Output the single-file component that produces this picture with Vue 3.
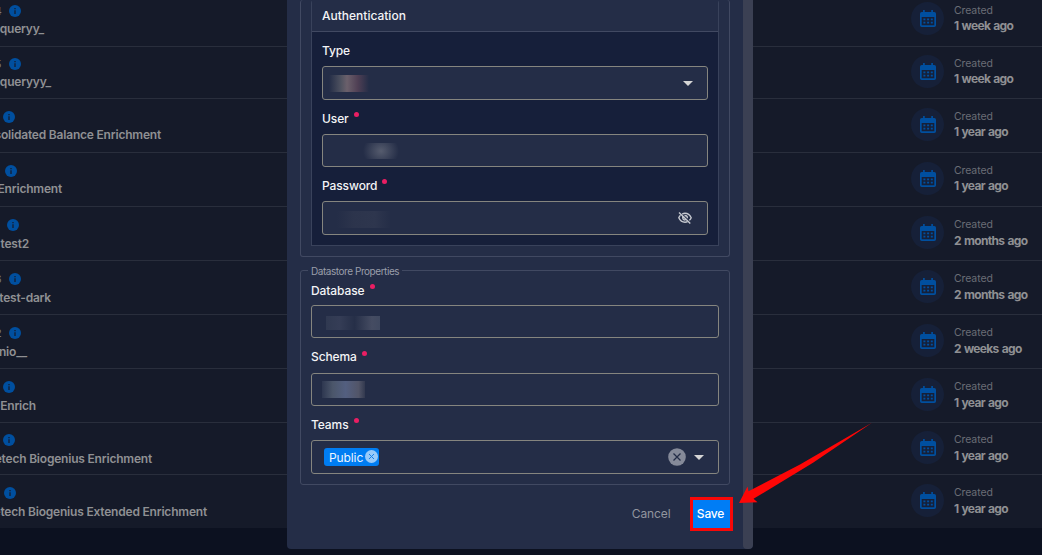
<script setup>
const rows = [
  { h: 47, pad: 2, id: '4', ix: 21.3, name: 'queryy_', nx: 44, ago: '1 week ago' },
  { h: 52, pad: 8, id: '5', ix: 21, name: 'queryyy_', nx: 51, ago: '1 week ago' },
  { h: 54, pad: 9, id: '', ix: 15.3, name: 'solidated Balance Enrichment', nx: 161, ago: '1 year ago' },
  { h: 54, pad: 9, id: '', ix: 17.3, name: 'Enrichment', nx: 62, ago: '1 year ago' },
  { h: 54, pad: 9, id: '', ix: 19.3, name: 'test2', nx: 29, down: 1, ago: '2 months ago' },
  { h: 54, pad: 9, id: '6', ix: 21, name: 'test-dark', nx: 51, down: 1, ago: '2 months ago' },
  { h: 54, pad: 9, id: '2', ix: 21.3, name: 'nio__', nx: 27, down: 1, ago: '2 weeks ago' },
  { h: 54, pad: 9, id: '', ix: 14.5, name: 'Enrich', nx: 36, down: 1, ago: '1 year ago' },
  { h: 52, pad: 8, id: '', ix: 15, name: 'etech Biogenius Enrichment', nx: 152, down: 1, ago: '1 year ago' },
  { h: 53, pad: 9, id: '', ix: 16, name: 'etech Biogenius Extended Enrichment', nx: 207, down: 1, ago: '1 year ago' },
]
</script>

<template>
  <div class="page">
    <div class="list">
      <div v-for="(r, i) in rows" :key="i" class="row" :style="{ height: r.h + 'px', paddingTop: r.pad + 'px' }">
        <div class="source">
          <div class="ident" :style="{ width: r.ix + 'px' }">
            <span>{{ r.id }}</span>
            <svg class="info" viewBox="0 0 12 12">
              <circle cx="6" cy="6" r="6" fill="#004f9f" />
              <path d="M6 2.9v1.3M6 5.2v3.7" stroke="#151a29" stroke-width="1.2" />
            </svg>
          </div>
          <div class="name" :class="{ down: r.down }" :style="{ width: r.nx + 'px' }"><span>{{ r.name }}</span></div>
        </div>
        <div class="created">
          <div class="round">
            <svg width="16" height="18" viewBox="0 0 16 18">
              <path d="M3.9 0v3M12.1 0v3" stroke="#004f9f" stroke-width="1.7" />
              <path fill-rule="evenodd" fill="#004f9f" d="M1.8 2h12.4Q16 2 16 3.8v11.4q0 1.8-1.8 1.8H1.8Q0 17 0 15.2V3.8Q0 2 1.8 2zM1.7 7v8.3h12.6V7z" />
              <path d="M3.4 9.3h9.4M3.4 12.7h9.4" stroke="#004f9f" stroke-width="1.8" stroke-dasharray="2 1.7" />
            </svg>
          </div>
          <div class="when" :class="{ down: r.down }"><span>Created</span><b>{{ r.ago }}</b></div>
        </div>
      </div>
    </div>

    <div class="modal">
      <div class="body">
        <section class="group first">
          <div class="panel">
            <header>Authentication</header>
            <div class="fields">
              <label>Type</label>
              <div class="input h34"><i class="mask m1"></i><i class="caret"></i></div>
              <label>User<em></em></label>
              <div class="input h33"><i class="mask m2"></i></div>
              <label>Password<em></em></label>
              <div class="input h34">
                <i class="mask m3"></i>
                <svg class="eye" width="14" height="12" viewBox="0 0 14 12" fill="none" stroke="#c5c8cf" stroke-width="1.4">
                  <path d="M4.2 2.1Q5.5 1.3 7 1.3c2.8 0 5 1.8 6.2 4.4-.5 1.1-1.1 2-1.9 2.6M9.6 9.7q-1.2.5-2.6.5C4.2 10.2 2 8.4.8 5.7 1.2 4.7 1.8 3.9 2.5 3.3" />
                  <path d="M6.5 3.500Q9.400 3.400 9.400 6.200M4.700 4.900Q4.400 7.900 7.500 8.100M1 .6l11.300 10.800" />
                </svg>
              </div>
            </div>
          </div>
        </section>

        <section class="group second">
          <span class="legend">Datastore Properties</span>
          <label>Database<em></em></label>
          <div class="input h33"><i class="mask m4"></i></div>
          <label>Schema<em></em></label>
          <div class="input h33"><i class="mask m5"></i></div>
          <label>Teams<em></em></label>
          <div class="input h34">
            <span class="chip">Public
              <svg width="13" height="13" viewBox="0 0 13 13">
                <circle cx="6.5" cy="6.5" r="6.5" fill="#99caf9" />
                <path d="M4 4l5 5M9 4l-5 5" stroke="#1680e8" />
              </svg>
            </span>
            <svg class="clear" width="18" height="18" viewBox="0 0 18 18">
              <circle cx="9" cy="9" r="8.8" fill="#858a99" />
              <path d="M5.5 5.5l7 7M12.500 5.500l-7 7" stroke="#242d47" stroke-width="1.3" />
            </svg>
            <i class="caret"></i>
          </div>
        </section>

        <footer><span class="cancel">Cancel</span><button class="save">Save</button></footer>
      </div>
      <div class="scroll"></div>
    </div>

    <svg class="arrow" width="1042" height="555" viewBox="0 0 1042 555">
      <path fill="#fe0606" d="M739 503L747.5 486.5L748.5 491.2L800 464.5L872 422.7L813 462.8L753.5 498.8L757.5 502.3Z" />
    </svg>
  </div>
</template>

<style>
body { margin: 0; background: #0c1120; }
</style>

<style scoped>
* { box-sizing: border-box; }
.page { position: relative; width: 1042px; height: 555px; overflow: hidden; background: #0c1120; font-family: Inter, sans-serif; font-size: 12px; }
.row { display: flex; justify-content: space-between; background: #151a29; border-bottom: 1px solid #292e3c; }
.row:last-child { border-bottom: 0; }
.source { display: flex; flex-direction: column; }
.ident { display: flex; align-items: center; justify-content: flex-end; gap: 7.5px; height: 18px; white-space: nowrap; font-size: 11px; color: #777a82; }
.info { width: 12px; height: 12px; flex: none; }
.name { display: flex; justify-content: flex-end; height: 18px; line-height: 18px; white-space: nowrap; font-weight: 600; color: #8f9093; letter-spacing: -0.2px; }
.name.down { margin-top: 1px; }
.created { display: flex; width: 131px; gap: 10px; }
.round { width: 33px; height: 33px; flex: none; border-radius: 50%; background: #162038; display: flex; align-items: center; justify-content: center; }
.when { display: flex; flex-direction: column; padding-top: 1px; white-space: nowrap; color: #6a6d76; font-size: 10.5px; line-height: 15px; letter-spacing: -0.1px; }
.when b { margin-top: -1px; font-size: 12px; line-height: 17px; font-weight: 700; letter-spacing: -0.65px; word-spacing: 0.8px; color: #8f9093; }
.when.down b { margin-top: 0; }

.modal { position: absolute; left: 287px; top: 0; width: 466px; height: 549px; display: flex; background: #242d47; border-radius: 0 0 4px 4px; overflow: hidden; }
.body { width: 456px; padding: 0 13px; }
.scroll { width: 10px; background: #3b4053; border-radius: 0 0 4px 4px; }
.group { border: 1px solid #414962; border-radius: 3px; padding: 0 10px; }
.first { border-top: 0; height: 257px; }
.panel { height: 246px; border: 1px solid #39425b; border-top: 0; border-radius: 3px 3px 0 0; background: #161f3a; color: #f3f4f6; }
header { height: 32px; line-height: 32px; padding-left: 10px; border-bottom: 1px solid #414962; background: #242d47; font-weight: 500; }
.fields { padding: 0 10px; }
label { display: flex; align-items: center; height: 34px; padding-top: 2px; color: #f3f4f6; font-weight: 500; letter-spacing: -0.1px; }
label em { width: 5px; height: 5px; border-radius: 50%; background: #ea1e63; margin: -7px 0 0 5px; }
.input { display: flex; align-items: center; border: 1px solid #85857f; border-radius: 3px; background: #242d47; padding-right: 14px; }
.h33 { height: 33px; }
.h34 { height: 34px; }
.caret { margin-left: auto; border: 5px solid transparent; border-top-color: #d5d5d5; border-bottom: 0; }
.eye { margin-left: auto; margin-right: 1px; }
.mask { display: block; }
.m1 { width: 40px; height: 17px; margin-left: 6px; background: linear-gradient(90deg, #242d47, #4f5260 30%, #6b606b 45%, #4f3f54 72%, #242d47); }
.m2 { width: 36px; height: 16px; margin-left: 40px; background: radial-gradient(ellipse 18px 16px, #565c6e, #242d47); }
.m3 { width: 54px; height: 17px; margin: 3px 0 0 14px; background: linear-gradient(90deg, #242d47, #2c344c 30%, #2e364e 70%, #242d47); }
.m4 { width: 54px; height: 14px; margin: 2px 0 0 14px; background: linear-gradient(90deg, #303951, #353d56 25%, #262f48 53%, #454c62 85%, #404960); }
.m5 { width: 43px; height: 17px; margin-left: 10px; background: linear-gradient(90deg, #2e3750, #4b566a 25%, #535f80 55%, #525568 85%, #32394f); }
.second { position: relative; height: 215px; margin-top: 13px; padding-top: 2px; }
.legend { position: absolute; left: 7px; top: -7px; padding: 0 3px; background: #242d47; color: #9a9eaa; font-size: 10px; line-height: 14px; letter-spacing: -0.45px; white-space: nowrap; }
.second label:first-of-type { height: 32px; }
.second label:nth-of-type(2) { height: 35px; }
.chip { display: flex; align-items: center; gap: 2px; width: 55px; height: 18px; margin-left: 12px; padding-left: 5px; border-radius: 3px; background: #007df2; color: #edf5ff; letter-spacing: -0.1px; }
.chip svg { margin-top: -2px; }
.clear { margin-left: auto; margin-right: 8px; }
.clear + .caret { margin-left: 0; }
footer { display: flex; justify-content: flex-end; align-items: center; height: 34px; margin: 12px -2.5px 0 0; }
.cancel { color: #92959f; margin: -1px 19px 0 0; letter-spacing: -0.1px; }
.save { width: 43px; height: 34px; padding: 0 1px 1px 0; border: 3px solid #f80808; background: #007df5; color: #fff; font: 500 12px Inter, sans-serif; letter-spacing: -0.2px; }
.arrow { position: absolute; left: 0; top: 0; }
</style>
